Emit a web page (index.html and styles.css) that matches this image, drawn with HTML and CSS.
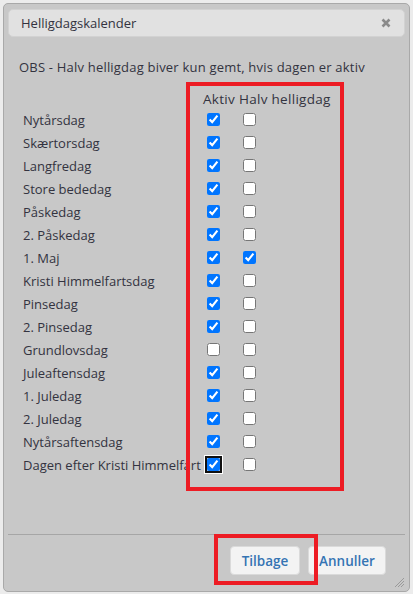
FILE: index.html
```html
<!DOCTYPE html>
<html lang="da">
<head>
<meta charset="utf-8">
<title>Helligdagskalender</title>
<link rel="stylesheet" href="styles.css">
</head>
<body>
<div class="dialog">
  <div class="titlebar">
    <span class="title">Helligdagskalender</span>
    <span class="close">
      <svg width="10" height="10" viewBox="0 0 10 10"><path d="M1.5 1.5 L8.5 8.5 M8.5 1.5 L1.5 8.5" stroke="#8a8a8a" stroke-width="2.6" stroke-linecap="butt"/></svg>
    </span>
  </div>
  <div class="content">
    <p class="note">OBS - Halv helligdag biver kun gemt, hvis dagen er aktiv</p>
    <div class="head"><span>Aktiv</span> <span>Halv helligdag</span></div>
    <div class="grid">
      <div class="label">Nytårsdag</div><div class="cell"><input type="checkbox" checked></div><div class="cell"><input type="checkbox"></div>
      <div class="label">Skærtorsdag</div><div class="cell"><input type="checkbox" checked></div><div class="cell"><input type="checkbox"></div>
      <div class="label">Langfredag</div><div class="cell"><input type="checkbox" checked></div><div class="cell"><input type="checkbox"></div>
      <div class="label">Store bededag</div><div class="cell"><input type="checkbox" checked></div><div class="cell"><input type="checkbox"></div>
      <div class="label">Påskedag</div><div class="cell"><input type="checkbox" checked></div><div class="cell"><input type="checkbox"></div>
      <div class="label">2. Påskedag</div><div class="cell"><input type="checkbox" checked></div><div class="cell"><input type="checkbox"></div>
      <div class="label">1. Maj</div><div class="cell"><input type="checkbox" checked></div><div class="cell"><input type="checkbox" checked></div>
      <div class="label">Kristi Himmelfartsdag</div><div class="cell"><input type="checkbox" checked></div><div class="cell"><input type="checkbox"></div>
      <div class="label">Pinsedag</div><div class="cell"><input type="checkbox" checked></div><div class="cell"><input type="checkbox"></div>
      <div class="label">2. Pinsedag</div><div class="cell"><input type="checkbox" checked></div><div class="cell"><input type="checkbox"></div>
      <div class="label">Grundlovsdag</div><div class="cell"><input type="checkbox"></div><div class="cell"><input type="checkbox"></div>
      <div class="label">Juleaftensdag</div><div class="cell"><input type="checkbox" checked></div><div class="cell"><input type="checkbox"></div>
      <div class="label">1. Juledag</div><div class="cell"><input type="checkbox" checked></div><div class="cell"><input type="checkbox"></div>
      <div class="label">2. Juledag</div><div class="cell"><input type="checkbox" checked></div><div class="cell"><input type="checkbox"></div>
      <div class="label">Nytårsaftensdag</div><div class="cell"><input type="checkbox" checked></div><div class="cell"><input type="checkbox"></div>
      <div class="label">Dagen efter Kristi Himmelfart</div><div class="cell"><input type="checkbox" class="focused" checked></div><div class="cell"><input type="checkbox"></div>
    </div>
  </div>
  <div class="footer">
    <button class="btn btn-back">Tilbage</button>
    <button class="btn btn-cancel">Annuller</button>
  </div>
  <span class="grip">
    <svg width="12" height="12" viewBox="0 0 12 12"><path d="M11 2 L2 11 M11 5 L5 11 M11 8 L8 11" stroke="#9a9a9a" stroke-width="1"/></svg>
  </span>
  <div class="mark mark-cols"></div>
  <div class="mark mark-btn"></div>
</div>
</body>
</html>
```

FILE: styles.css
```css
html, body {
  margin: 0;
  padding: 0;
}
body {
  background: #ececec;
  font-family: "Open Sans", "Liberation Sans", Arial, sans-serif;
  font-size: 13px;
  color: #333340;
  width: 413px;
  height: 594px;
  overflow: hidden;
}
.dialog {
  position: relative;
  box-sizing: border-box;
  margin: 3px;
  width: 407px;
  height: 589px;
  border: 1px solid #a9a9a9;
  border-radius: 5px;
  background: #c8c8c8;
  padding: 5px 4px 0 4px;
  display: flex;
  flex-direction: column;
}
.titlebar {
  height: 28px;
  box-sizing: border-box;
  border: 1px solid #d2d2d2;
  border-radius: 5px;
  background: #e1e1e1;
  display: flex;
  align-items: center;
  justify-content: space-between;
  padding: 0 13px 0 12px;
}
.title {
  font-size: 13px;
  line-height: 16px;
  color: #333340;
}
.close {
  display: flex;
}
.content {
  flex: 1;
  padding: 22px 0 0 11px;
}
.note {
  margin: 0;
  line-height: 16px;
  font-size: 13px;
  letter-spacing: 0.2px;
  color: #333340;
}
.head {
  margin: 15px 0 0 184px;
  height: 18px;
  line-height: 18px;
  font-size: 13.5px;
  letter-spacing: 0.3px;
  white-space: nowrap;
}
.grid {
  display: grid;
  grid-template-columns: 180px 36px 60px;
  grid-auto-rows: 23px;
  margin-left: 4px;
}
.label {
  display: flex;
  align-items: center;
  white-space: nowrap;
  line-height: 16px;
}
.cell {
  display: flex;
  align-items: center;
}
.cell input {
  margin: 0 0 0 4px;
  width: 13px;
  height: 13px;
}
.cell input.focused {
  outline: 2px solid #101010;
  outline-offset: 0;
  box-shadow: 0 0 0 3px #ffffff;
  border-radius: 2px;
}
.footer {
  height: 57px;
  box-sizing: border-box;
  border-top: 1px solid #a6a6a6;
  display: flex;
  justify-content: flex-end;
  align-items: flex-start;
  gap: 8px;
  padding: 11px 19px 0 0;
}
.btn {
  height: 29px;
  box-sizing: border-box;
  border: 1px solid #dadada;
  border-radius: 4px;
  background: #f3f3f3;
  color: #3574b3;
  font-family: "Open Sans", "Liberation Sans", Arial, sans-serif;
  font-size: 13.5px;
  font-weight: 600;
  padding: 0;
}
.btn-back {
  width: 70px;
}
.btn-cancel {
  width: 78px;
}
.grip {
  position: absolute;
  right: 4px;
  bottom: 3px;
  display: flex;
}
.mark {
  position: absolute;
  box-sizing: border-box;
  border: 4px solid #ed1c24;
  pointer-events: none;
}
.mark-cols {
  left: 182px;
  top: 78px;
  width: 158px;
  height: 409px;
}
.mark-btn {
  left: 210px;
  top: 530px;
  width: 104px;
  height: 51px;
}
```
